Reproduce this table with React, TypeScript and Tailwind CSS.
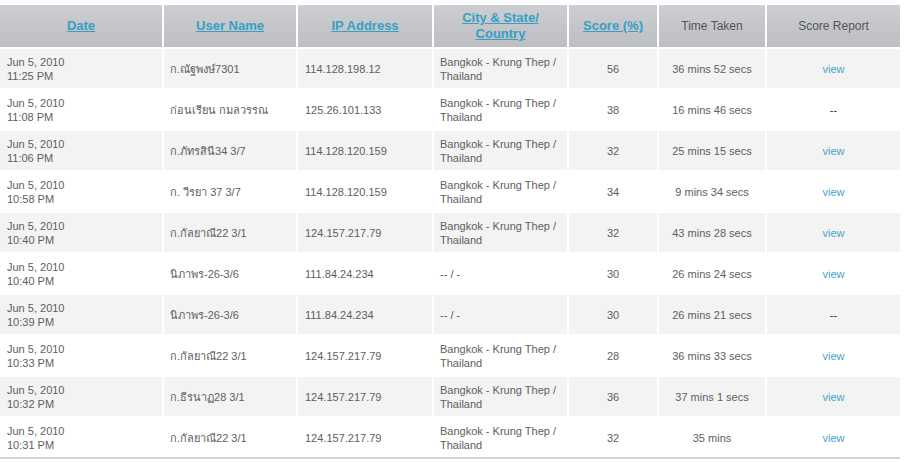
const rows = [
  { time: "11:25 PM", user: "ก.ณัฐพงษ์7301", ip: "114.128.198.12", city: "Bangkok - Krung Thep / Thailand", score: "56", taken: "36 mins 52 secs", view: true },
  { time: "11:08 PM", user: "ก่อนเรียน กมลวรรณ", ip: "125.26.101.133", city: "Bangkok - Krung Thep / Thailand", score: "38", taken: "16 mins 46 secs", view: false },
  { time: "11:06 PM", user: "ก.ภัทรสินี34 3/7", ip: "114.128.120.159", city: "Bangkok - Krung Thep / Thailand", score: "32", taken: "25 mins 15 secs", view: true },
  { time: "10:58 PM", user: "ก. วีรยา 37 3/7", ip: "114.128.120.159", city: "Bangkok - Krung Thep / Thailand", score: "34", taken: "9 mins 34 secs", view: true },
  { time: "10:40 PM", user: "ก.กัลยาณี22 3/1", ip: "124.157.217.79", city: "Bangkok - Krung Thep / Thailand", score: "32", taken: "43 mins 28 secs", view: true },
  { time: "10:40 PM", user: "นิภาพร-26-3/6", ip: "111.84.24.234", city: "-- / -", score: "30", taken: "26 mins 24 secs", view: true },
  { time: "10:39 PM", user: "นิภาพร-26-3/6", ip: "111.84.24.234", city: "-- / -", score: "30", taken: "26 mins 21 secs", view: false },
  { time: "10:33 PM", user: "ก.กัลยาณี22 3/1", ip: "124.157.217.79", city: "Bangkok - Krung Thep / Thailand", score: "28", taken: "36 mins 33 secs", view: true },
  { time: "10:32 PM", user: "ก.ธีรนาฏ28 3/1", ip: "124.157.217.79", city: "Bangkok - Krung Thep / Thailand", score: "36", taken: "37 mins 1 secs", view: true },
  { time: "10:31 PM", user: "ก.กัลยาณี22 3/1", ip: "124.157.217.79", city: "Bangkok - Krung Thep / Thailand", score: "32", taken: "35 mins", view: true },
];

const head = "h-[42px] flex items-center justify-center text-center bg-gradient-to-b from-[#cdced1] to-[#bdbec1]";
const link = "text-[13px] font-bold text-[#35a0c4] underline leading-[16px]";

export default function App() {
  return (
    <div className="w-[906px] h-[462px] bg-white pt-[5px] font-['Liberation_Sans',Arial,sans-serif] text-[11px] text-[#5e5e5e]">
      <div className="w-[900px] grid grid-cols-[162px_132px_134px_133px_88px_106px_133px] gap-[2px]">
        <div className={head}><span className={link}>Date</span></div>
        <div className={head}><span className={link}>User Name</span></div>
        <div className={head}><span className={link}>IP Address</span></div>
        <div className={head}><span className={link}>City &amp; State/<br />Country</span></div>
        <div className={head}><span className={link}>Score (%)</span></div>
        <div className={head}><span className="text-[12px] text-[#555]">Time Taken</span></div>
        <div className={head}><span className="text-[12px] text-[#555]">Score Report</span></div>

        {rows.map((r, i) => {
          const bg = i % 2 === 0 ? "bg-[#f3f3f3]" : "bg-white";
          const cell = `h-[39px] flex items-center leading-[14px] ${bg}`;
          return [
            <div key={`d${i}`} className={`${cell} pl-[7px]`}>
              <div>Jun 5, 2010<br />{r.time}</div>
            </div>,
            <div key={`u${i}`} className={`${cell} pl-[6px]`}>{r.user}</div>,
            <div key={`ip${i}`} className={`${cell} pl-[7px]`}>{r.ip}</div>,
            <div key={`c${i}`} className={`${cell} pl-[6px] pr-[2px]`}>{r.city}</div>,
            <div key={`s${i}`} className={`${cell} justify-center`}>{r.score}</div>,
            <div key={`t${i}`} className={`${cell} justify-center`}>{r.taken}</div>,
            <div key={`v${i}`} className={`${cell} justify-center`}>
              {r.view ? <span className="text-[#3ea6c7]">view</span> : <span className="text-[#333]">--</span>}
            </div>,
          ];
        })}
      </div>
      <div className="w-[900px] h-[2px] bg-[#d4d4d4]" />
    </div>
  );
}
